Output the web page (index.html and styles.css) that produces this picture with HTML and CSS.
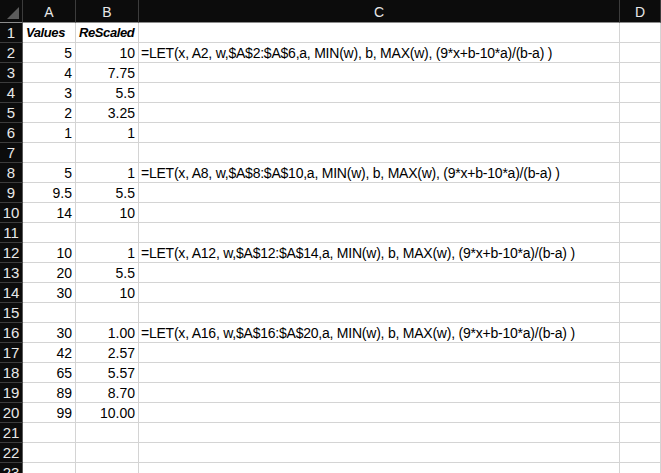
FILE: index.html
```html
<!DOCTYPE html>
<html>
<head>
<meta charset="utf-8">
<link rel="stylesheet" href="styles.css">
</head>
<body>
<div class="sheet">
  <div class="ch corner"><span class="tri"></span></div>
  <div class="ch">A</div>
  <div class="ch">B</div>
  <div class="ch">C</div>
  <div class="ch">D</div>

  <div class="rh">1</div><div class="c hd">Values</div><div class="c hd">ReScaled</div><div class="c"></div><div class="c"></div>
  <div class="rh">2</div><div class="c n">5</div><div class="c n">10</div><div class="c f">=LET(x, A2, w,$A$2:$A$6,a, MIN(w), b, MAX(w), (9*x+b-10*a)/(b-a) )</div><div class="c"></div>
  <div class="rh">3</div><div class="c n">4</div><div class="c n">7.75</div><div class="c"></div><div class="c"></div>
  <div class="rh">4</div><div class="c n">3</div><div class="c n">5.5</div><div class="c"></div><div class="c"></div>
  <div class="rh">5</div><div class="c n">2</div><div class="c n">3.25</div><div class="c"></div><div class="c"></div>
  <div class="rh">6</div><div class="c n">1</div><div class="c n">1</div><div class="c"></div><div class="c"></div>
  <div class="rh">7</div><div class="c"></div><div class="c"></div><div class="c"></div><div class="c"></div>
  <div class="rh">8</div><div class="c n">5</div><div class="c n">1</div><div class="c f">=LET(x, A8, w,$A$8:$A$10,a, MIN(w), b, MAX(w), (9*x+b-10*a)/(b-a) )</div><div class="c"></div>
  <div class="rh">9</div><div class="c n">9.5</div><div class="c n">5.5</div><div class="c"></div><div class="c"></div>
  <div class="rh">10</div><div class="c n">14</div><div class="c n">10</div><div class="c"></div><div class="c"></div>
  <div class="rh">11</div><div class="c"></div><div class="c"></div><div class="c"></div><div class="c"></div>
  <div class="rh">12</div><div class="c n">10</div><div class="c n">1</div><div class="c f">=LET(x, A12, w,$A$12:$A$14,a, MIN(w), b, MAX(w), (9*x+b-10*a)/(b-a) )</div><div class="c"></div>
  <div class="rh">13</div><div class="c n">20</div><div class="c n">5.5</div><div class="c"></div><div class="c"></div>
  <div class="rh">14</div><div class="c n">30</div><div class="c n">10</div><div class="c"></div><div class="c"></div>
  <div class="rh">15</div><div class="c"></div><div class="c"></div><div class="c"></div><div class="c"></div>
  <div class="rh">16</div><div class="c n">30</div><div class="c n">1.00</div><div class="c f">=LET(x, A16, w,$A$16:$A$20,a, MIN(w), b, MAX(w), (9*x+b-10*a)/(b-a) )</div><div class="c"></div>
  <div class="rh">17</div><div class="c n">42</div><div class="c n">2.57</div><div class="c"></div><div class="c"></div>
  <div class="rh">18</div><div class="c n">65</div><div class="c n">5.57</div><div class="c"></div><div class="c"></div>
  <div class="rh">19</div><div class="c n">89</div><div class="c n">8.70</div><div class="c"></div><div class="c"></div>
  <div class="rh">20</div><div class="c n">99</div><div class="c n">10.00</div><div class="c"></div><div class="c"></div>
  <div class="rh">21</div><div class="c"></div><div class="c"></div><div class="c"></div><div class="c"></div>
  <div class="rh">22</div><div class="c"></div><div class="c"></div><div class="c"></div><div class="c"></div>
  <div class="rh">23</div><div class="c"></div><div class="c"></div><div class="c"></div><div class="c"></div>
</div>
</body>
</html>
```
FILE: styles.css
```css
html, body {
  margin: 0;
  padding: 0;
  background: #ffffff;
  overflow: hidden;
}
.sheet {
  display: grid;
  grid-template-columns: 23px 53px 63px 481px 41px;
  grid-template-rows: 23px repeat(23, 20px);
  font-family: "Liberation Sans", Arial, sans-serif;
  font-size: 14px;
  color: #000;
  width: 661px;
}
.sheet > div {
  box-sizing: border-box;
  white-space: nowrap;
  line-height: 20px;
}
.ch {
  background: #0c0c0c;
  color: #e8e8e8;
  text-align: center;
  line-height: 24px !important;
  border-right: 1px solid #3c3c3c;
  border-bottom: 1px solid #8c8c8c;
}
.corner {
  position: relative;
}
.tri {
  position: absolute;
  right: 3px;
  bottom: 3px;
  width: 0;
  height: 0;
  border-left: 12px solid transparent;
  border-bottom: 12px solid #5c5c5c;
}
.rh {
  background: #0c0c0c;
  color: #e8e8e8;
  text-align: center;
  font-size: 15px;
  border-right: 1px solid #5a5a5a;
  border-bottom: 1px solid #3c3c3c;
}
.c {
  background: #fff;
  border-right: 1px solid #d4d4d4;
  border-bottom: 1px solid #d4d4d4;
  padding: 0 3px 0 2px;
}
.n {
  text-align: right;
}
.hd {
  font-weight: bold;
  font-style: italic;
  font-size: 13px;
  letter-spacing: -0.4px;
  padding-left: 3px;
}
.f {
  overflow: visible;
  letter-spacing: -0.23px;
}
```
